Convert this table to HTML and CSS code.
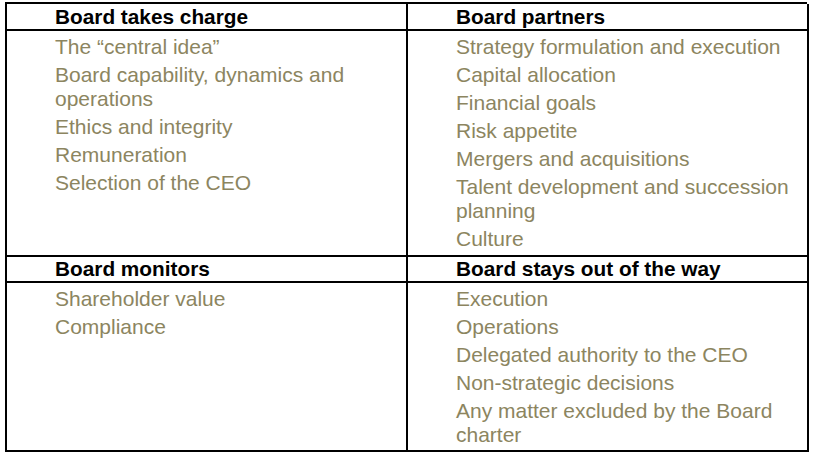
FILE: index.html
```html
<!DOCTYPE html>
<html lang="en">
<head>
<meta charset="utf-8">
<title>Board roles</title>
<link rel="stylesheet" href="styles.css">
</head>
<body>
<div class="grid">
  <div class="head left">Board takes charge</div>
  <div class="head">Board partners</div>
  <div class="cell left body1">
    <p>The “central idea”</p>
    <p>Board capability, dynamics and operations</p>
    <p>Ethics and integrity</p>
    <p>Remuneration</p>
    <p>Selection of the CEO</p>
  </div>
  <div class="cell body1">
    <p>Strategy formulation and execution</p>
    <p>Capital allocation</p>
    <p>Financial goals</p>
    <p>Risk appetite</p>
    <p>Mergers and acquisitions</p>
    <p>Talent development and succession planning</p>
    <p>Culture</p>
  </div>
  <div class="head left">Board monitors</div>
  <div class="head">Board stays out of the way</div>
  <div class="cell left body2">
    <p>Shareholder value</p>
    <p>Compliance</p>
  </div>
  <div class="cell body2">
    <p>Execution</p>
    <p>Operations</p>
    <p>Delegated authority to the CEO</p>
    <p>Non-strategic decisions</p>
    <p>Any matter excluded by the Board charter</p>
  </div>
</div>
</body>
</html>
```
FILE: styles.css
```css
html, body {
  margin: 0;
  padding: 0;
  background: #fff;
}
body {
  padding: 2px 0 0 5px;
  font-family: "Liberation Sans", Arial, sans-serif;
}
.grid {
  display: grid;
  grid-template-columns: 401px 401px;
  grid-template-rows: 27px 226px 26px 169px;
  width: 802px;
  box-sizing: border-box;
  border-top: 2px solid #000;
  border-left: 2px solid #000;
}
.grid > div {
  box-sizing: border-box;
  border-right: 2px solid #000;
  border-bottom: 2px solid #000;
  padding-left: 48px;
}
.head {
  font-weight: bold;
  font-size: 20.8px;
  color: #000;
  display: flex;
  align-items: center;
}
.cell {
  padding-top: 4px;
  color: #8c8560;
  font-size: 21px;
  line-height: 24px;
}
.cell p {
  margin: 0 0 4px 0;
  padding-right: 0;
}
```
